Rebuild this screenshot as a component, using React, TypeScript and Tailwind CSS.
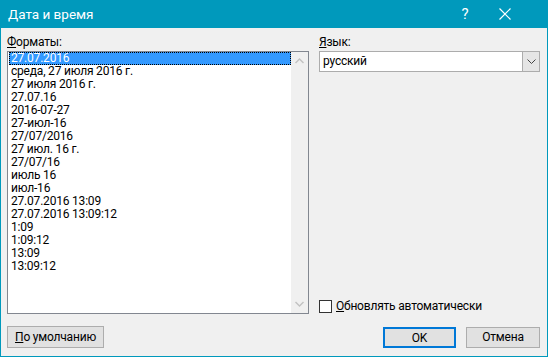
import { useState } from 'react';

const formats = [
    '27.07.2016',
    'среда, 27 июля 2016 г.',
    '27 июля 2016 г.',
    '27.07.16',
    '2016-07-27',
    '27-июл-16',
    '27/07/2016',
    '27 июл. 16 г.',
    '27/07/16',
    'июль 16',
    'июл-16',
    '27.07.2016 13:09',
    '27.07.2016 13:09:12',
    '1:09',
    '1:09:12',
    '13:09',
    '13:09:12',
];

function Chevron({ up }: { up?: boolean }) {
    return (
        <svg width="9" height="6" viewBox="0 0 9 6" className={up ? '' : 'rotate-180'}>
            <path d="M0.5 5 L4.5 1 L8.5 5" fill="none" stroke="#c2c2c2" strokeWidth="1.4" />
        </svg>
    );
}

export default function App() {
    const [selected, setSelected] = useState(0);
    const [auto, setAuto] = useState(false);

    return (
        <div
            className="w-[548px] h-[357px] flex flex-col bg-[#0099bc] text-[12px] tracking-[-0.2px] text-black overflow-hidden"
            style={{ fontFamily: 'Roboto, "Noto Sans", sans-serif' }}
        >
            {/* Title bar */}
            <div className="h-[28px] shrink-0 flex items-center text-white">
                <span className="pl-[8px] text-[13.5px] tracking-normal flex-1">Дата и время</span>
                <span className="w-[34px] text-center text-[15px]">?</span>
                <span className="w-[46px] mr-[20px] flex justify-center">
                    <svg width="12" height="12" viewBox="0 0 12 12">
                        <path d="M0.5 0.5 L11.5 11.5 M11.5 0.5 L0.5 11.5" stroke="white" strokeWidth="1.2" />
                    </svg>
                </span>
            </div>

            {/* Body */}
            <div className="flex-1 mx-[1px] mb-[2px] bg-[#f0f0f0] flex flex-col px-[6px] pt-[6px] pb-[8px]">
                <div className="flex flex-1 gap-[10px]">
                    {/* Formats */}
                    <div className="w-[302px] flex flex-col">
                        <div className="h-[17px] leading-[17px]"><span className="underline">Ф</span>орматы:</div>
                        <div className="h-[263px] border border-[#828790] bg-white flex">
                            <div className="flex-1 pl-[1px]">
                                {formats.map((f, i) => (
                                    <div
                                        key={f}
                                        onClick={() => setSelected(i)}
                                        className={`h-[13px] leading-[13px] pl-[2px] whitespace-nowrap ${i === selected ? 'bg-[#3399ff] text-white outline-1 outline-dotted outline-black -outline-offset-1' : ''}`}
                                    >
                                        {f}
                                    </div>
                                ))}
                            </div>
                            <div className="w-[17px] bg-[#f0f0f0] flex flex-col justify-between items-center py-[6px]">
                                <Chevron up />
                                <Chevron />
                            </div>
                        </div>
                    </div>

                    {/* Language */}
                    <div className="flex-1 flex flex-col pr-[1px]">
                        <div className="h-[17px] leading-[17px]"><span className="underline">Я</span>зык:</div>
                        <div className="h-[21px] border border-[#acacac] bg-white flex">
                            <div className="flex-1 pl-[3px] leading-[19px]">русский</div>
                            <div className="w-[17px] bg-[#e5e5e5] border-l border-[#acacac] flex items-center justify-center">
                                <svg width="9" height="5" viewBox="0 0 9 5">
                                    <path d="M0.5 0.5 L4.5 4.5 L8.5 0.5" fill="none" stroke="#444" strokeWidth="1" />
                                </svg>
                            </div>
                        </div>
                        <div className="flex-1" />
                        <label className="flex items-center gap-[4px] mb-[-1px] cursor-default" onClick={() => setAuto(!auto)}>
                            <span className="w-[13px] h-[13px] border border-[#333] bg-white" />
                            <span><span className="underline">О</span>бновлять автоматически</span>
                        </label>
                    </div>
                </div>

                {/* Buttons */}
                <div className="flex items-center mt-[12px]">
                    <button className="w-[97px] h-[22px] bg-[#e1e1e1] border border-[#adadad]">
                        <span className="underline">П</span>о умолчанию
                    </button>
                    <div className="flex-1" />
                    <button className="w-[73px] h-[21px] bg-[#e1e1e1] border-2 border-[#0078d7]">OK</button>
                    <button className="w-[74px] h-[21px] ml-[10px] mr-[1px] bg-[#e1e1e1] border border-[#adadad]">Отмена</button>
                </div>
            </div>
        </div>
    );
}
